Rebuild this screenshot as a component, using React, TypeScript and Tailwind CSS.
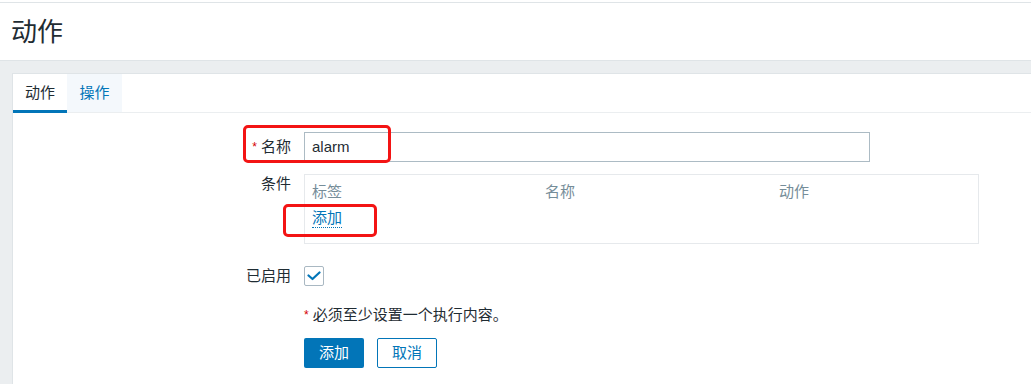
import React from "react";

const labelCls = "text-right text-[15px] leading-[18px] text-[#1f2c33]";

const Required = () => <span className="text-[#d40000] text-[12px] align-top mr-[4px]">*</span>;

export default function App() {
  return (
    <div className="relative min-h-[384px] bg-[#ebeef0] font-['Liberation_Sans','Noto_Sans_CJK_SC',sans-serif] text-[#1f2c33] flex flex-col">
      <div className="h-[2px] bg-white" />
      <header className="h-[59px] shrink-0 bg-white border-t border-b border-[#dfe4e7] flex items-center px-[11px]">
        <h1 className="text-[26px] leading-none font-normal">动作</h1>
      </header>

      <div className="flex-1 pt-[12px] pl-[12px] flex">
        <div className="flex-1 bg-white border-l border-t border-[#dfe4e7] flex flex-col">
          {/* tabs */}
          <div className="h-[39px] border-b border-[#ebeef0] flex">
            <div className="relative w-[54px] flex items-center justify-center text-[15px] text-[#1f2c33]">
              动作
              <span className="absolute left-0 right-0 bottom-[-1px] h-[3px] bg-[#0275b8]" />
            </div>
            <div className="w-[55px] flex items-center justify-center text-[15px] text-[#0275b8] bg-[#f4f8fc]">
              操作
            </div>
          </div>

          {/* form */}
          <div className="pt-[19px] grid grid-cols-[278px_1fr] gap-x-[13px]">
            <div className={`${labelCls} self-center`}>
              <Required />名称
            </div>
            <div className="w-[566px] h-[30px] border border-[#acbbc4] flex items-center pl-[7px] text-[15px]">
              alarm
            </div>

            <div className={`${labelCls} mt-[12px] pt-[1px]`}>条件</div>
            <div className="mt-[12px] w-[675px] h-[70px] border border-[#e6e9ec] pl-[7px] pt-[8px] text-[15px] leading-[18px]">
              <div className="grid grid-cols-[233px_234px_1fr] text-[#768d99]">
                <span>标签</span>
                <span>名称</span>
                <span>动作</span>
              </div>
              <div className="mt-[8px]">
                <span className="text-[#0275b8] border-b border-dotted border-[#0275b8] pb-[1px]">添加</span>
              </div>
            </div>

            <div className={`${labelCls} mt-[22px] self-center`}>已启用</div>
            <div className="mt-[22px]">
              <div className="w-[20px] h-[20px] border border-[#a9b8c2] rounded-[2px] flex items-center justify-center">
                <svg width="14" height="10" viewBox="0 0 14 10" fill="none">
                  <polyline points="1.5,4.5 5.5,8 12.5,1.5" stroke="#0275b8" strokeWidth="2.2" strokeLinecap="round" strokeLinejoin="round" />
                </svg>
              </div>
            </div>

            <div />
            <div className="mt-[20px] text-[15px] leading-[18px]">
              <Required />必须至少设置一个执行内容。
            </div>

            <div />
            <div className="mt-[14px] flex gap-[13px] pb-[16px]">
              <button className="w-[60px] h-[30px] rounded-[2px] bg-[#0275b8] text-white text-[15px]">添加</button>
              <button className="w-[60px] h-[30px] rounded-[2px] border border-[#0275b8] bg-white text-[#0275b8] text-[15px]">取消</button>
            </div>
          </div>
        </div>
      </div>

      {/* red annotation boxes */}
      <div className="absolute left-[243px] top-[125px] w-[148px] h-[38px] border-[3px] border-[#f31414] rounded-[5px] pointer-events-none" />
      <div className="absolute left-[283px] top-[204px] w-[94px] h-[33px] border-[3px] border-[#f31414] rounded-[5px] pointer-events-none" />
    </div>
  );
}
